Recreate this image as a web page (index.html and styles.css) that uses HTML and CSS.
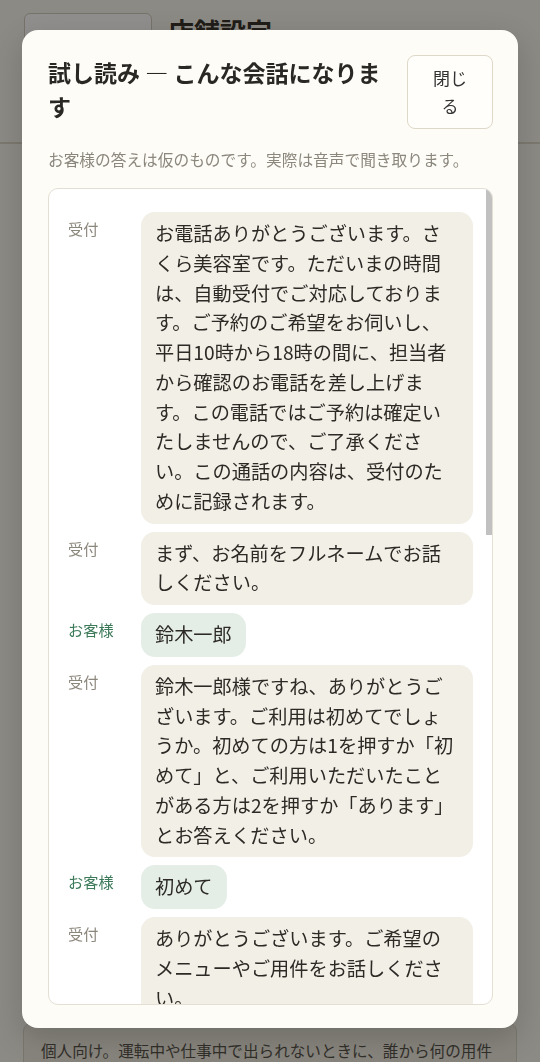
FILE: index.html
```html
<!DOCTYPE html>
<html lang="ja">
<head>
    <meta charset="UTF-8">
    <meta name="viewport" content="width=device-width, initial-scale=1.0">
    <title>店舗設定</title>
    <link rel="stylesheet" href="styles.css">
</head>

<body>
    <header class="topbar">
        <button class="back">← 戻る</button>
        <h1>店舗設定</h1>
    </header>

    <main class="page">
        <section class="card card-tall"></section>
        <section class="card">
            <p>個人向け。運転中や仕事中で出られないときに、誰から何の用件かを聞き取ります。</p>
        </section>
    </main>

    <div class="overlay">
        <div class="modal">
            <div class="modal-head">
                <h2 class="modal-title">試し読み — こんな会話になります</h2>
                <button class="close">閉じる</button>
            </div>
            <p class="note">お客様の答えは仮のものです。実際は音声で聞き取ります。</p>

            <div class="chat-frame">
                <div class="chat">
                    <div class="msg">
                        <span class="who">受付</span>
                        <p class="bubble">お電話ありがとうございます。さくら美容室です。ただいまの時間は、自動受付でご対応しております。ご予約のご希望をお伺いし、平日10時から18時の間に、担当者から確認のお電話を差し上げます。この電話ではご予約は確定いたしませんので、ご了承ください。この通話の内容は、受付のために記録されます。</p>
                    </div>
                    <div class="msg">
                        <span class="who">受付</span>
                        <p class="bubble">まず、お名前をフルネームでお話しください。</p>
                    </div>
                    <div class="msg guest">
                        <span class="who">お客様</span>
                        <p class="bubble">鈴木一郎</p>
                    </div>
                    <div class="msg">
                        <span class="who">受付</span>
                        <p class="bubble">鈴木一郎様ですね、ありがとうございます。ご利用は初めてでしょうか。初めての方は1を押すか「初めて」と、ご利用いただいたことがある方は2を押すか「あります」とお答えください。</p>
                    </div>
                    <div class="msg guest">
                        <span class="who">お客様</span>
                        <p class="bubble">初めて</p>
                    </div>
                    <div class="msg">
                        <span class="who">受付</span>
                        <p class="bubble">ありがとうございます。ご希望のメニューやご用件をお話しください。</p>
                    </div>
                </div>
                <div class="thumb"></div>
            </div>
        </div>
    </div>
</body>

</html>
```

FILE: styles.css
```css
* {
    box-sizing: border-box;
}

body {
    margin: 0;
    background: #f8f6f0;
    color: #2d2a26;
    font-family: "Noto Sans CJK JP", "Noto Sans", sans-serif;
}

button {
    font-family: inherit;
}

/* page behind the dialog */
.topbar {
    display: flex;
    align-items: flex-start;
    gap: 16px;
    min-height: 144px;
    padding: 13px 24px 0;
    border-bottom: 2px solid #d9d5c9;
}

.back {
    width: 128px;
    height: 48px;
    border: 1px solid #cfcabd;
    border-radius: 6px;
    background: #fff;
    font-size: 16px;
    color: #333;
}

.topbar h1 {
    margin: 0;
    font-size: 26px;
    line-height: 1.4;
    font-weight: 700;
}

.page {
    display: flex;
    flex-direction: column;
    gap: 16px;
    padding: 16px 23px;
}

.card {
    border: 1px solid #d6d2c5;
    border-radius: 8px;
    background: #eeebe2;
    padding: 14px 17px;
}

.card-tall {
    min-height: 847px;
}

.card p {
    margin: 0;
    font-size: 15.6px;
    line-height: 24px;
    color: #4e4b45;
}

/* dialog */
.overlay {
    position: fixed;
    inset: 0;
    display: flex;
    padding: 30px 22px 34px;
    background: rgba(20, 18, 12, 0.47);
}

.modal {
    flex: 1;
    display: flex;
    flex-direction: column;
    min-height: 0;
    padding: 25px 25px 23px 26px;
    border-radius: 16px;
    background: #fdfcf7;
    box-shadow: 0 10px 30px rgba(0, 0, 0, 0.18);
}

.modal-head {
    display: flex;
    align-items: flex-start;
    gap: 16px;
}

.modal-title {
    flex: 1;
    margin: 0;
    font-size: 23px;
    line-height: 34px;
    font-weight: 700;
    color: #2a2825;
}

.close {
    flex-shrink: 0;
    width: 86px;
    height: 74px;
    padding: 8px 20px;
    border: 1px solid #ddd8c8;
    border-radius: 8px;
    background: #fffefa;
    font-size: 17px;
    line-height: 28px;
    color: #333;
}

.note {
    margin: 20px 0 17px;
    font-size: 15.7px;
    line-height: 22px;
    color: #8b877d;
}

.chat-frame {
    flex: 1;
    min-height: 0;
    position: relative;
    overflow: hidden;
    border: 1px solid #e3dfd3;
    border-radius: 10px;
    background: #fff;
}

.chat {
    height: 100%;
    overflow: hidden;
    display: flex;
    flex-direction: column;
    gap: 8px;
    padding: 23px 19px 23px 19px;
}

/* scrollbar thumb, drawn over the list */
.thumb {
    position: absolute;
    top: 0;
    right: 0;
    width: 6px;
    height: 346px;
    background: #c1c1c1;
}

.msg {
    display: grid;
    grid-template-columns: 73px 1fr;
    align-items: start;
}

.who {
    padding-top: 6px;
    font-size: 15.2px;
    line-height: 21px;
    color: #8c877c;
}

.bubble {
    justify-self: start;
    margin: 0;
    padding: 7px 14px;
    border-radius: 14px;
    background: #f1efe6;
    font-size: 19.2px;
    line-height: 1.55;
    color: #2d2a26;
}

.guest .who {
    color: #3d7a5a;
}

.guest .bubble {
    background: #e4eee7;
}
```
